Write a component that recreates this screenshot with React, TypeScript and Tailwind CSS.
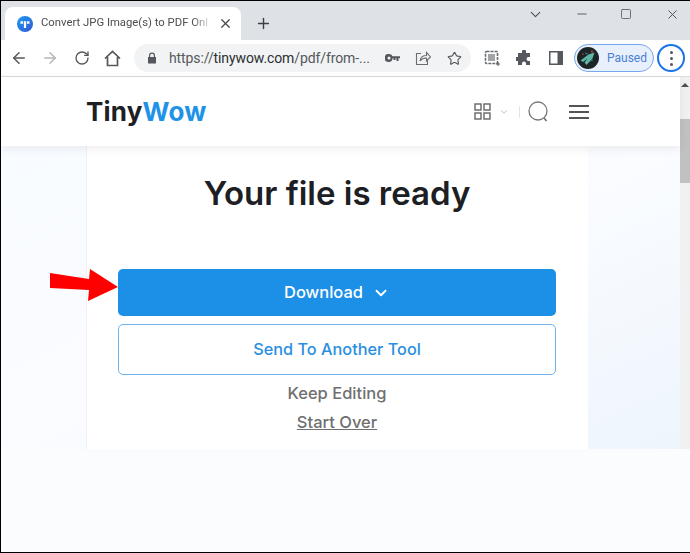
import { ArrowLeft, ArrowRight, ChevronDown, Minus, Plus, RotateCw, Square, Star, X } from 'lucide-react'

const uiFont = "font-['Roboto','Noto_Sans',sans-serif]"
const pageFont = "font-['Inter','Noto_Sans',sans-serif]"

function Favicon() {
  return (
    <svg width="16" height="16" viewBox="0 0 16 16" className="shrink-0">
      <defs>
        <linearGradient id="fav" x1="0" y1="0" x2="1" y2="1">
          <stop offset="0" stopColor="#1d9bf0" />
          <stop offset="1" stopColor="#3457d5" />
        </linearGradient>
      </defs>
      <circle cx="8" cy="8" r="8" fill="url(#fav)" />
      <path d="M3.5 5.2h2.6v2.6H3.5zM9.9 5.2h2.6v2.6H9.9zM6.9 5.2h2.2V12H6.9z" fill="#fff" />
    </svg>
  )
}

function Avatar() {
  return (
    <svg width="22" height="22" viewBox="0 0 22 22" className="shrink-0">
      <circle cx="11" cy="11" r="11" fill="#1c2526" />
      <path d="M3.5 13.5l8-6 6-2-2 6-6 6.5-2-2.5 3-4-4.5 3.5z" fill="#5fb5a6" />
      <path d="M8 6l3 1M13 14l3-1" stroke="#2d7f74" strokeWidth="1.2" />
      <circle cx="15" cy="4.5" r="1" fill="#d8404a" />
      <circle cx="6" cy="7" r="0.8" fill="#d8404a" />
    </svg>
  )
}

function TabStrip() {
  return (
    <div className="flex h-[39px] shrink-0 items-end bg-[#dee1e6] pl-1">
      <div className="flex h-[33px] w-[236px] items-center rounded-t-lg bg-white pl-3 pr-2">
        <Favicon />
        <span className="ml-2 w-[172px] [mask-image:linear-gradient(to_right,black_88%,transparent)] text-[11.3px] whitespace-nowrap text-[#4a4d51]">
          Convert JPG Image(s) to PDF Onl
        </span>
        <X size={15} strokeWidth={2} className="ml-[5px] text-[#45484c]" />
      </div>
      <div className="flex h-[33px] items-center pl-[14px]">
        <Plus size={17} strokeWidth={2} className="text-[#3c4043]" />
      </div>
      <div className="ml-auto flex h-[26px] items-center self-start text-[#4a4d51]">
        <ChevronDown size={17} strokeWidth={1.5} className="mr-[31px]" />
        <Minus size={14} strokeWidth={1.5} className="mr-[31px]" />
        <Square size={12} strokeWidth={1.5} className="mr-[33px]" />
        <X size={15} strokeWidth={1.5} className="mr-[10px]" />
      </div>
    </div>
  )
}

function Toolbar() {
  return (
    <div className="flex h-[37px] shrink-0 items-center border-b border-[#dadce0] bg-white pl-[9px]">
      <ArrowLeft size={18} strokeWidth={2} className="text-[#55585c]" />
      <ArrowRight size={18} strokeWidth={2} className="ml-[13px] text-[#b4b6b9]" />
      <RotateCw size={16} strokeWidth={2} className="ml-[15px] text-[#55585c]" />
      <svg width="17" height="17" viewBox="0 0 17 17" className="ml-[14px]" fill="none" stroke="#55585c" strokeWidth="1.7">
        <path d="M1 8.5L8.5 1.5 16 8.5M3.5 7v8.5h10V7" />
      </svg>
      <div className="ml-[13px] flex h-7 w-[337px] items-center rounded-full bg-[#f1f3f4] pl-[13px] text-[#55585c]">
        <svg width="10" height="12" viewBox="0 0 10 12" fill="#55585c">
          <path d="M2 5V3.5a3 3 0 016 0V5h1v6.5H1V5zM3.2 5h3.6V3.5a1.8 1.8 0 00-3.6 0z" />
        </svg>
        <span className="ml-3 w-[202px] text-[14px] tracking-[-0.1px] whitespace-nowrap">
          https://<span className="text-[#2c2e31]">tinywow.com</span>/pdf/from-...
        </span>
        <svg width="15" height="8" viewBox="0 0 15 8" className="ml-[14px]" fill="#55585c">
          <path d="M4 0a4 4 0 013.6 2.3H15v2h-1.5V7h-2V4.3h-1V6h-2V4.3h-.9A4 4 0 114 0zm0 2.5a1.5 1.5 0 100 3 1.5 1.5 0 000-3z" />
        </svg>
        <svg width="16" height="16" viewBox="0 0 16 16" className="ml-[15px]" fill="none" stroke="#6a6d71" strokeWidth="1.1">
          <path d="M6 3.5H1.5v11h11V10M5 11c.5-3.5 3-5.5 6.5-5.5V2.5l4 4.5-4 4V8C8.8 8 6.5 9 5 11z" />
        </svg>
        <Star size={15} strokeWidth={1.8} className="ml-4" />
      </div>
      <svg width="16" height="16" viewBox="0 0 16 16" className="ml-[13px]" fill="none">
        <rect x="1.5" y="1.5" width="12" height="12" rx="1" stroke="#6a6d71" strokeWidth="1.6" strokeDasharray="3 1" />
        <rect x="4" y="4" width="7" height="7" fill="#a2a5a8" />
        <path d="M14 12v4M12 14h4" stroke="#55585c" />
      </svg>
      <svg width="16" height="16" viewBox="0 0 16 16" className="ml-4" fill="#55585c">
        <path d="M6 1.5a2 2 0 014 0V3h4v4h-1.5a2 2 0 000 4H14v4h-4v-1.5a2 2 0 00-4 0V15H2v-4H.5a2 2 0 010-4H2V3h4z" />
      </svg>
      <svg width="14" height="14" viewBox="0 0 14 14" className="ml-[17px]">
        <rect width="14" height="14" fill="#55585c" />
        <rect x="1.5" y="1.5" width="7" height="11" fill="#fff" />
      </svg>
      <div className="ml-[11px] flex h-7 w-20 items-center rounded-full border border-[#7aa7e9] bg-[#e8f0fe] pl-[2px]">
        <Avatar />
        <span className="ml-2 text-[12px] text-[#4a7fd0]">Paused</span>
      </div>
      <div className="ml-[3px] flex h-7 w-7 flex-col items-center justify-center gap-[3px] rounded-full border-2 border-[#1a73e8]">
        <span className="size-[3px] rounded-full bg-[#55585c]" />
        <span className="size-[3px] rounded-full bg-[#55585c]" />
        <span className="size-[3px] rounded-full bg-[#55585c]" />
      </div>
    </div>
  )
}

function SiteHeader() {
  return (
    <header className={`relative z-10 flex h-[69px] shrink-0 items-center bg-white pl-[85px] shadow-[0_3px_10px_rgba(0,0,0,0.07)] ${pageFont}`}>
      <div className="w-[120px] text-[26px] leading-none font-bold tracking-[0.2px] whitespace-nowrap">
        <span className="text-[#1c2024]">Tiny</span>
        <span className="text-[#1f93e8]">Wow</span>
      </div>
      <svg width="17" height="17" viewBox="0 0 17 17" className="ml-[268px]" fill="none" stroke="#666" strokeWidth="1.4">
        <rect x="1" y="1" width="6" height="6" />
        <rect x="10" y="1" width="6" height="6" />
        <rect x="1" y="10" width="6" height="6" />
        <rect x="10" y="10" width="6" height="6" />
      </svg>
      <ChevronDown size={10} strokeWidth={1.5} className="ml-2 text-[#999]" />
      <div className="ml-[10px] h-3 w-px bg-[#e4e4e4]" />
      <svg width="21" height="22" viewBox="0 0 21 22" className="ml-2" fill="none" stroke="#777" strokeWidth="1.3">
        <circle cx="10" cy="10" r="9" />
        <path d="M16 17l2.5 3" strokeWidth="1.8" />
      </svg>
      <div className="ml-5 flex w-5 flex-col gap-[4px]">
        <span className="h-[2px] bg-[#555]" />
        <span className="h-[2px] bg-[#555]" />
        <span className="h-[2px] bg-[#555]" />
      </div>
    </header>
  )
}

function Scrollbar() {
  return (
    <div className="flex w-[10px] shrink-0 flex-col bg-[#f1f1f1]">
      <div className="flex h-[42px] justify-center pt-[6px]">
        <div className="h-0 w-0 border-x-[4px] border-b-[4px] border-x-transparent border-b-[#505050]" />
      </div>
      <div className="h-16 bg-[#c1c1c1]" />
    </div>
  )
}

export default function App() {
  return (
    <div className={`relative flex h-[553px] w-[690px] flex-col overflow-hidden border-t border-b border-l border-black bg-[#fbfcfe] ${uiFont}`}>
      <TabStrip />
      <Toolbar />
      <div className="flex h-[372px] shrink-0">
        <div className="flex min-w-0 flex-1 flex-col">
          <SiteHeader />
          <main className="flex flex-1 bg-gradient-to-br from-[#f8fbff] via-[#fafcff] to-[#eef5fd] pl-[85px] pr-[92px]">
            <div className={`flex flex-1 flex-col items-center border-l border-[#f0f1f2] bg-white pt-[27px] pr-8 pl-[31px] ${pageFont}`}>
              <h1 className="text-[33px] leading-10 font-semibold text-[#1c2024]">Your file is ready</h1>
              <button className="mt-[56px] flex h-[47px] w-full items-center justify-center gap-[9px] rounded-[5px] bg-[#1c8fe6] text-[16.5px] font-medium text-white">
                Download
                <ChevronDown size={18} strokeWidth={2.5} />
              </button>
              <button className="mt-2 h-[51px] w-full rounded-[5px] border border-[#6db4ee] bg-white text-[16.3px] font-medium text-[#2a8fe0]">
                Send To Another Tool
              </button>
              <p className="mt-[6px] text-[16.5px] leading-6 font-medium text-[#6f6f6f]">Keep Editing</p>
              <a className="mt-[5px] text-[16.5px] leading-6 font-medium text-[#6f6f6f] underline">Start Over</a>
            </div>
          </main>
        </div>
        <Scrollbar />
      </div>
      <svg width="72" height="34" viewBox="0 0 72 34" className="absolute top-[267px] left-[47px]">
        <path d="M2 5l39 6 1-10 28 18-30 14 1-11-39-2z" fill="#ff0000" />
      </svg>
    </div>
  )
}
